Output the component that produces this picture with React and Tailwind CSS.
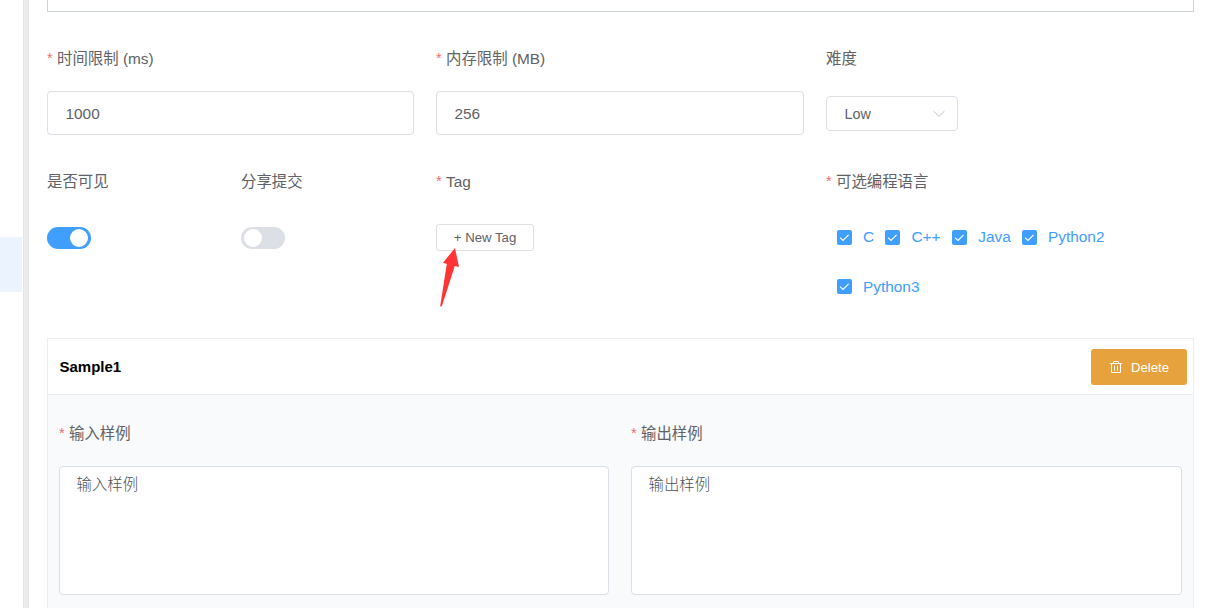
import React from "react";

function Label({ text, required }) {
  return (
    <div className="flex h-6 items-center whitespace-nowrap text-[15.4px] text-[#606266]">
      {required && <span className="mr-[4.4px] text-[14.5px] text-[#f56c6c]">*</span>}
      <span>{text}</span>
    </div>
  );
}

function Switch({ on }) {
  return (
    <div
      className={`mt-[33px] flex h-[22px] w-11 items-center rounded-full px-[3px] ${
        on ? "justify-end bg-[#409eff]" : "justify-start bg-[#dcdfe6]"
      }`}
    >
      <div className="h-[18px] w-[18px] rounded-full bg-white"></div>
    </div>
  );
}

function Check({ text, className }) {
  return (
    <div className={`flex items-center text-[15.4px] text-[#409eff] ${className}`}>
      <span className="mr-[11px] flex h-[15px] w-[15px] items-center justify-center rounded-[2px] bg-[#409eff]">
        <svg width="11" height="9" viewBox="0 0 11 9" fill="none" stroke="white" strokeWidth="1.1">
          <path d="M1 4.6L4 7.4L9.6 1.8" />
        </svg>
      </span>
      <span>{text}</span>
    </div>
  );
}

function Sample({ text, className }) {
  return (
    <div className={className}>
      <Label text={text} required />
      <div className="mt-5 h-[129px] rounded-[4px] border border-[#dcdfe6] bg-white px-[16.5px] pt-[5px] text-[15.4px] leading-[25px] font-light text-[#505256]">
        {text}
      </div>
    </div>
  );
}

export default function App() {
  return (
    <div className="flex h-[608px] w-[1207px] overflow-hidden bg-white font-['Liberation_Sans','Noto_Sans_CJK_SC',sans-serif]">
      {/* Side menu edge */}
      <aside className="w-[23px] shrink-0 pt-[237px]">
        <div className="h-[55px] w-[22px] bg-[#ebf3ff]"></div>
      </aside>
      <div className="w-[6px] shrink-0 border-x border-[#e4e4e4] bg-[#ebebeb]"></div>

      <main className="ml-[18px] w-[1147px] shrink-0">
        {/* Bottom of the editor */}
        <div className="h-3 border-x border-b border-[#ccd4d8]"></div>

        {/* Limits */}
        <div className="mt-[35px] flex">
          <div className="mr-[22px] w-[367px]">
            <Label text="时间限制 (ms)" required />
            <div className="mt-5 flex h-11 items-center rounded-[4px] border border-[#dcdfe6] px-[17.5px] pt-[2px] text-[15.4px] text-[#606266]">
              1000
            </div>
          </div>
          <div className="mr-[22px] w-[368px]">
            <Label text="内存限制 (MB)" required />
            <div className="mt-5 flex h-11 items-center rounded-[4px] border border-[#dcdfe6] px-[17.5px] pt-[2px] text-[15.4px] text-[#606266]">
              256
            </div>
          </div>
          <div>
            <Label text="难度" />
            <div className="mt-[25px] flex h-[35px] w-[132px] items-center justify-between rounded-[4px] border border-[#dcdfe6] pr-3 pl-[17.5px] text-[14.3px] text-[#606266]">
              <span className="pt-[2px]">Low</span>
              <svg width="12" height="8" viewBox="0 0 12 8" fill="none" stroke="#c0c4cc">
                <path d="M0.5 1L6 6.4L11.5 1" />
              </svg>
            </div>
          </div>
        </div>

        {/* Visibility, tags, languages */}
        <div className="mt-[35px] flex h-[168px]">
          <div className="w-[194px]">
            <Label text="是否可见" />
            <Switch on />
          </div>
          <div className="w-[195px]">
            <Label text="分享提交" />
            <Switch />
          </div>
          <div className="relative w-[390px]">
            <Label text="Tag" required />
            <div className="mt-[30px] flex h-[27px] w-[98px] items-center justify-center rounded-[3px] border border-[#dcdfe6] text-[13.2px] text-[#606266]">
              + New Tag
            </div>
            <svg className="absolute top-[77px] left-[3px]" width="22" height="62" viewBox="0 0 22 62" fill="#ff3535">
              <path d="M16 1L20 20L15.8 19L3 58.8Q2 60.2 1.2 59L7.8 17L4 15.7Z" />
            </svg>
          </div>
          <div>
            <Label text="可选编程语言" required />
            <div className="mt-[31px] ml-[11px] flex h-6">
              <Check text="C" className="w-[48.4px]" />
              <Check text="C++" className="w-[66.8px]" />
              <Check text="Java" className="w-[69.8px]" />
              <Check text="Python2" />
            </div>
            <div className="mt-[25.5px] ml-[11px] flex h-6">
              <Check text="Python3" />
            </div>
          </div>
        </div>

        {/* Sample card */}
        <div className="h-[290px] border border-[#ebeef5] bg-[#f9fafc]">
          <div className="flex h-14 items-center justify-between border-b border-[#ebeef5] bg-white pr-[6px] pl-[11.5px]">
            <span className="pt-[2px] text-[15px] font-bold text-black">Sample1</span>
            <div className="flex h-9 w-24 items-center rounded-[3px] bg-[#e6a23c] pl-[18px] text-[13.2px] text-white">
              <svg className="mr-2" width="14" height="14" viewBox="0 0 14 14" fill="none" stroke="white">
                <path d="M1 3.5H13M4.5 3V1.5H9.5V3M2.5 3.5V12.5H11.5V3.5M5.5 5.5V10.5M8.5 5.5V10.5" />
              </svg>
              <span className="pt-[2px]">Delete</span>
            </div>
          </div>
          <div className="flex pt-[27px] pl-[11px]">
            <Sample text="输入样例" className="mr-[22px] w-[550px]" />
            <Sample text="输出样例" className="w-[551px]" />
          </div>
        </div>
      </main>
    </div>
  );
}
